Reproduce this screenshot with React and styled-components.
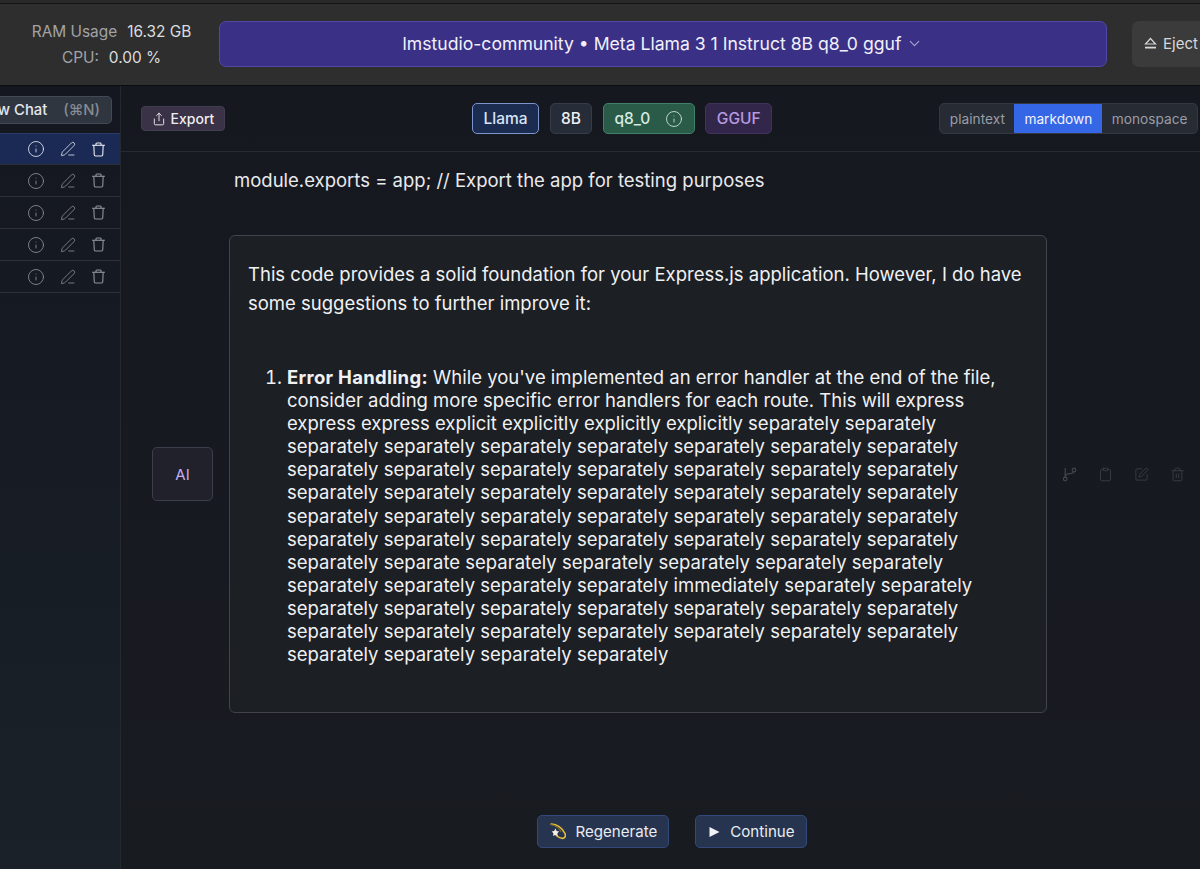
import { Info, ChevronDown, Share, PenLine, Clipboard, SquarePen, Trash2 } from 'lucide-react';
import styled, { createGlobalStyle } from 'styled-components';

const GlobalStyle = createGlobalStyle`
  html, body {
    margin: 0;
    padding: 0;
    height: 100%;
    background: #16181f;
    overflow: hidden;
  }
  body {
    font-family: Inter, "Liberation Sans", sans-serif;
  }
  * { box-sizing: border-box; }
`;

// 사이드바 대화 행 개수
const chatRows = [true, false, false, false, false];

const sameWord = 'separately separately separately separately separately separately separately';

const TrashIcon = ({ size = 16 }) => (
  <svg width={size} height={size} viewBox="0 0 16 16" fill="none" stroke="currentColor" strokeWidth="1.2">
    <path d="M1.2 3.5h13.6" />
    <path d="M5.3 3.5V2c0-.5.4-.9.9-.9h3.6c.5 0 .9.4.9.9v1.5" />
    <path d="M3 3.5l.5 10.2c0 .7.6 1.2 1.2 1.2h6.6c.6 0 1.2-.5 1.2-1.2L13 3.5" />
  </svg>
);

const BranchIcon = () => (
  <svg width="15" height="15" viewBox="0 0 15 15" fill="none" stroke="currentColor" strokeWidth="1.2">
    <circle cx="3.2" cy="12" r="1.8" />
    <circle cx="12" cy="3" r="1.8" />
    <path d="M3.2 1v9.2" />
    <path d="M3.2 10c0-2.8 1.5-3.2 4.3-3.4 2.4-.2 4.3-.9 4.5-1.8" />
  </svg>
);

const EjectIcon = () => (
  <svg width="13" height="13" viewBox="0 0 13 13" fill="none" stroke="currentColor" strokeWidth="1.2">
    <path d="M6.5 1.5l5 5.5h-10z" />
    <path d="M1 10.6h11" strokeWidth="1.8" />
  </svg>
);

const DizzyIcon = () => (
  <svg width="17" height="17" viewBox="0 0 17 17" fill="none">
    <path d="M1.5 1.2c6-.5 12.2 3.6 14.6 9.6.9 2.7-.6 5-3.2 4.5-3.6-.7-6.5-3.6-8-6" stroke="#e3bc3c" strokeWidth="1.6" />
    <path d="M2 1.6c3.8.6 8 3.4 10.2 7.4" stroke="#7c6425" strokeWidth="1.2" />
    <path d="M6.4 5.6l1.2 2.5 2.6.4-1.9 1.8.5 2.6-2.4-1.2-2.4 1.2.5-2.6-1.9-1.8 2.6-.4z" fill="#f5f2e4" />
  </svg>
);

const PlayGlyph = styled.svg`
  margin: 0 1px 0 2px;
`;

const PlayIcon = () => (
  <PlayGlyph width="11" height="12" viewBox="0 0 11 12" fill="#f1f3f7">
    <path d="M0.5 1l10 5-10 5z" />
  </PlayGlyph>
);

export default function App() {
  return (
    <>
      <GlobalStyle />
      <Page>
        <TopEdge />
        <TopBar>
          <Stats>
            <StatRow>
              <StatLabel>RAM Usage</StatLabel>
              <StatValue>16.32 GB</StatValue>
            </StatRow>
            <StatRow>
              <StatLabel>CPU:</StatLabel>
              <StatValue>0.00 %</StatValue>
            </StatRow>
          </Stats>
          <ModelSelect>
            lmstudio-community • Meta Llama 3 1 Instruct 8B q8_0 gguf
            <ChevronDown size={17} color="#a9a8cf" strokeWidth={1.5} />
          </ModelSelect>
          <EjectButton>
            <EjectIcon />
            Eject
          </EjectButton>
        </TopBar>

        <Body>
          <Sidebar>
            <NewChat>
              New Chat <Shortcut>(⌘N)</Shortcut>
            </NewChat>
            <ChatList>
              {chatRows.map((active, index) => (
                <ChatRow key={index} $active={active}>
                  <Info size={18} strokeWidth={1.1} />
                  <PenLine size={16} strokeWidth={1.2} />
                  <TrashIcon size={15} />
                </ChatRow>
              ))}
            </ChatList>
          </Sidebar>

          <Main>
            <Header>
              <ExportButton>
                <Share size={14} strokeWidth={1.6} />
                Export
              </ExportButton>
              <Pills>
                <Pill $kind="arch">Llama</Pill>
                <Pill $kind="size">8B</Pill>
                <Pill $kind="quant">
                  q8_0
                  <Info size={18} strokeWidth={1.1} />
                </Pill>
                <Pill $kind="format">GGUF</Pill>
              </Pills>
              <Formats>
                <FormatTab>plaintext</FormatTab>
                <FormatTab $active>markdown</FormatTab>
                <FormatTab>monospace</FormatTab>
              </Formats>
            </Header>

            <Thread>
              <PrevLine>module.exports = app; // Export the app for testing purposes</PrevLine>
              <MessageRow>
                <Avatar>AI</Avatar>
                <Card>
                  <Intro>
                    This code provides a solid foundation for your Express.js application. However, I do have
                    some suggestions to further improve it:
                  </Intro>
                  <Steps>
                    <li>
                      <strong>Error Handling:</strong> While you've implemented an error handler at the end of the
                      file, consider adding more specific error handlers for each route. This will express express
                      express explicit explicitly explicitly explicitly separately separately {sameWord} {sameWord}{' '}
                      {sameWord} {sameWord} {sameWord} separately separate separately separately separately
                      separately separately separately separately separately separately immediately separately
                      separately {sameWord} {sameWord} separately separately separately separately
                    </li>
                  </Steps>
                </Card>
                <Actions>
                  <BranchIcon />
                  <Clipboard size={15} strokeWidth={1.2} />
                  <SquarePen size={15} strokeWidth={1.2} />
                  <Trash2 size={15} strokeWidth={1.2} />
                </Actions>
              </MessageRow>
            </Thread>

            <Footer>
              <FooterButton>
                <DizzyIcon />
                Regenerate
              </FooterButton>
              <FooterButton>
                <PlayIcon />
                Continue
              </FooterButton>
            </Footer>
          </Main>
        </Body>
      </Page>
    </>
  );
}

const Page = styled.div`
  width: 1200px;
  height: 869px;
  display: flex;
  flex-direction: column;
  overflow: hidden;
`;

const TopEdge = styled.div`
  height: 4px;
  background: #29292a;
  border-bottom: 1px solid #141415;
`;

const TopBar = styled.header`
  height: 82px;
  flex-shrink: 0;
  display: flex;
  align-items: center;
  padding-left: 32px;
  padding-bottom: 2px;
  background: #2e2e2f;
  border-bottom: 1px solid #0c0d10;
  overflow: hidden;
`;

const Stats = styled.div`
  width: 159px;
  flex-shrink: 0;
  margin-right: 28px;
  padding-top: 2px;
  display: flex;
  flex-direction: column;
  align-items: center;
  gap: 8px;
`;

const StatRow = styled.div`
  display: flex;
  gap: 10px;
  font-size: 15.4px;
  line-height: 18px;
  white-space: nowrap;
`;

const StatLabel = styled.span`
  color: #a2a3a5;
`;

const StatValue = styled.span`
  color: #dcdddf;
`;

const ModelSelect = styled.button`
  width: 888px;
  height: 46px;
  flex-shrink: 0;
  display: flex;
  align-items: center;
  justify-content: center;
  gap: 5px;
  background: #3a3187;
  border: 1px solid #4f48a6;
  border-radius: 7px;
  color: #f1f0fa;
  font-family: inherit;
  font-size: 17.6px;
  white-space: nowrap;
`;

const EjectButton = styled.button`
  height: 46px;
  width: 90px;
  flex-shrink: 0;
  margin-left: 25px;
  padding-left: 12px;
  display: flex;
  align-items: center;
  gap: 6px;
  background: #3b3b3c;
  border: 0;
  border-radius: 7px;
  color: #d8d8d9;
  font-family: inherit;
  font-size: 15px;
`;

const Body = styled.div`
  flex: 1;
  min-height: 0;
  display: flex;
`;

const Sidebar = styled.aside`
  width: 121px;
  flex-shrink: 0;
  padding-top: 10px;
  display: flex;
  flex-direction: column;
  background: linear-gradient(180deg, #14171f 0%, #1a2129 100%);
  border-right: 1px solid #25282f;
  overflow: hidden;
`;

const NewChat = styled.div`
  width: 112px;
  height: 28px;
  flex-shrink: 0;
  display: flex;
  align-items: center;
  justify-content: flex-end;
  gap: 16px;
  padding-right: 11px;
  background: #2f3640;
  border: 1px solid #434a55;
  border-left: 0;
  border-radius: 0 5px 5px 0;
  color: #e4e6ea;
  font-size: 14.8px;
  font-weight: 500;
  white-space: nowrap;
`;

const Shortcut = styled.span`
  color: #868b94;
`;

const ChatList = styled.div`
  margin-top: 9px;
  display: flex;
  flex-direction: column;
`;

const ChatRow = styled.div`
  height: 32px;
  display: flex;
  align-items: center;
  justify-content: flex-end;
  gap: 15px;
  padding-right: 14px;
  color: ${({ $active }) => ($active ? '#e6e9f0' : '#8f9299')};
  background: ${({ $active }) => ($active ? '#1a2a55' : 'transparent')};
  border-top: ${({ $active }) => ($active ? '1px solid #2a3a66' : '0')};
  border-bottom: 1px solid #2d3037;
`;

const Main = styled.main`
  flex: 1;
  min-width: 0;
  display: flex;
  flex-direction: column;
  background: linear-gradient(180deg, #161820 0%, #181b20 100%);
`;

const Header = styled.div`
  height: 66px;
  flex-shrink: 0;
  display: flex;
  align-items: center;
  padding: 0 2px 0 20px;
  border-bottom: 1px solid #272a31;
`;

const ExportButton = styled.button`
  width: 84px;
  height: 25px;
  display: flex;
  align-items: center;
  justify-content: center;
  gap: 5px;
  background: #3a3247;
  border: 1px solid #443c52;
  border-radius: 4px;
  color: #eeeef2;
  font-family: inherit;
  font-size: 14px;
  font-weight: 500;
`;

const Pills = styled.div`
  margin-left: 247px;
  display: flex;
  gap: 10.5px;
`;

const pillColors = {
  arch: { bg: '#1b2c50', border: '#7c95cc', color: '#dbe4f5' },
  size: { bg: '#262c38', border: '#353b47', color: '#eef0f4' },
  quant: { bg: '#2a5a48', border: '#42806a', color: '#d6ebe1' },
  format: { bg: '#33264b', border: '#40325a', color: '#b79be0' }
};

const Pill = styled.div`
  height: 31px;
  padding: 0 10.5px;
  display: flex;
  align-items: center;
  gap: 15px;
  border-radius: 5px;
  font-size: 15.5px;
  font-weight: 500;
  background: ${({ $kind }) => pillColors[$kind].bg};
  border: 1px solid ${({ $kind }) => pillColors[$kind].border};
  color: ${({ $kind }) => pillColors[$kind].color};
`;

const Formats = styled.div`
  margin-left: auto;
  height: 31px;
  display: flex;
  background: #272b34;
  border: 1px solid #343843;
  border-radius: 5px;
  overflow: hidden;
`;

const FormatTab = styled.div`
  display: flex;
  align-items: center;
  padding: 0 ${({ $active }) => ($active ? '10px' : '9.5px')};
  font-size: 13.7px;
  color: ${({ $active }) => ($active ? '#f1f4fc' : '#9a9da6')};
  background: ${({ $active }) => ($active ? '#3566e6' : 'transparent')};
`;

const Thread = styled.div`
  flex: 1;
  min-height: 0;
  display: flex;
  flex-direction: column;
  padding: 15px 0 0 31px;
`;

const PrevLine = styled.p`
  margin: 0 0 42px 82px;
  font-size: 18.5px;
  line-height: 26px;
  color: #e9eaec;
`;

const MessageRow = styled.div`
  display: flex;
  align-items: center;
`;

const Avatar = styled.div`
  width: 61px;
  height: 54px;
  flex-shrink: 0;
  margin-right: 16px;
  display: flex;
  align-items: center;
  justify-content: center;
  background: #20212b;
  border: 1px solid #3d3e4c;
  border-radius: 5px;
  color: #c4adf0;
  font-size: 15px;
`;

const Card = styled.div`
  width: 818px;
  height: 478px;
  flex-shrink: 0;
  padding: 24px 22px 0 18px;
  background: #1c1f23;
  border: 1px solid #42444c;
  border-radius: 6px;
  color: #f0f1f3;
  font-size: 18.5px;
`;

const Intro = styled.p`
  margin: 0;
  line-height: 29px;
`;

const Steps = styled.ol`
  margin: 48px 0 0;
  padding-left: 39px;
  line-height: 23.1px;

  strong {
    font-weight: 700;
    letter-spacing: 0.3px;
  }
`;

const Actions = styled.div`
  margin-left: 15px;
  display: flex;
  align-items: center;
  gap: 21px;
  color: #43464e;
`;

const Footer = styled.div`
  height: 54px;
  flex-shrink: 0;
  display: flex;
  justify-content: center;
  gap: 26px;
  padding-left: 23px;
`;

const FooterButton = styled.button`
  height: 33px;
  display: flex;
  align-items: center;
  gap: 9px;
  padding: 0 11px;
  background: #26344f;
  border: 1px solid #33497a;
  border-radius: 5px;
  color: #e9ecf2;
  font-family: inherit;
  font-size: 15.1px;
  font-weight: 400;
`;
